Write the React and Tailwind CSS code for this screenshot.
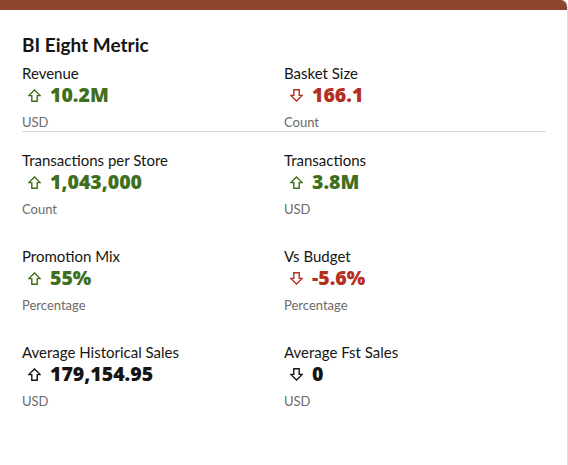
import React from "react";

const metrics = [
  { label: "Revenue", value: "10.2M", unit: "USD", dir: "up", tone: "green" },
  { label: "Basket Size", value: "166.1", unit: "Count", dir: "down", tone: "red" },
  { label: "Transactions per Store", value: "1,043,000", unit: "Count", dir: "up", tone: "green" },
  { label: "Transactions", value: "3.8M", unit: "USD", dir: "up", tone: "green" },
  { label: "Promotion Mix", value: "55%", unit: "Percentage", dir: "up", tone: "green" },
  { label: "Vs Budget", value: "-5.6%", unit: "Percentage", dir: "down", tone: "red" },
  { label: "Average Historical Sales", value: "179,154.95", unit: "USD", dir: "up", tone: "black" },
  { label: "Average Fst Sales", value: "0", unit: "USD", dir: "down", tone: "black" },
];

const toneClass = {
  green: "text-[#3f6f1d]",
  red: "text-[#b3301e]",
  black: "text-[#161513]",
};

// hollow block arrow
const Arrow = ({ dir }) => (
  <svg
    width="13"
    height="13"
    viewBox="0 0 13 13"
    className={`shrink-0 ${dir === "down" ? "rotate-180" : ""}`}
  >
    <path
      d="M6.5 0.9 L12.2 6.6 L9.2 6.6 L9.2 12.2 L3.8 12.2 L3.8 6.6 L0.8 6.6 Z"
      fill="none"
      stroke="currentColor"
      strokeWidth="1.4"
      strokeLinejoin="miter"
    />
  </svg>
);

const Metric = ({ m }) => (
  <div className="flex flex-col">
    <div className="text-[15px] leading-[20px] text-[#161513]">{m.label}</div>
    <div className={`flex items-center gap-[9px] pl-[6px] h-[24px] ${toneClass[m.tone]}`}>
      <Arrow dir={m.dir} />
      <span
        className="text-[19.5px] leading-[24px] font-black"
        style={{ fontFamily: "'Noto Sans', sans-serif" }}
      >
        {m.value}
      </span>
    </div>
    <div className="mt-[7px] text-[13px] leading-[17px] text-[#6b6b6b]">{m.unit}</div>
  </div>
);

export default function App() {
  return (
    <div
      className="w-[568px] h-[465px] bg-white"
      style={{ fontFamily: "Lato, 'Noto Sans', sans-serif" }}
    >
      <div className="h-full border-r border-[#dedede] rounded-tr-[7px] overflow-hidden">
        <div className="h-[10px] bg-[#8c4630]" />
        <div className="pt-[23px] px-[22px] w-[568px]">
          <h2 className="text-[19px] leading-[24px] font-bold text-[#161513]">BI Eight Metric</h2>
          <div className="w-[524px] mt-[6px]">
            <div className="grid grid-cols-2 border-b border-[#d9d9d9]">
              <Metric m={metrics[0]} />
              <Metric m={metrics[1]} />
            </div>
            <div className="grid grid-cols-2 gap-y-[28px] pt-[18px]">
              {metrics.slice(2).map((m) => (
                <Metric key={m.label} m={m} />
              ))}
            </div>
          </div>
        </div>
      </div>
    </div>
  );
}
